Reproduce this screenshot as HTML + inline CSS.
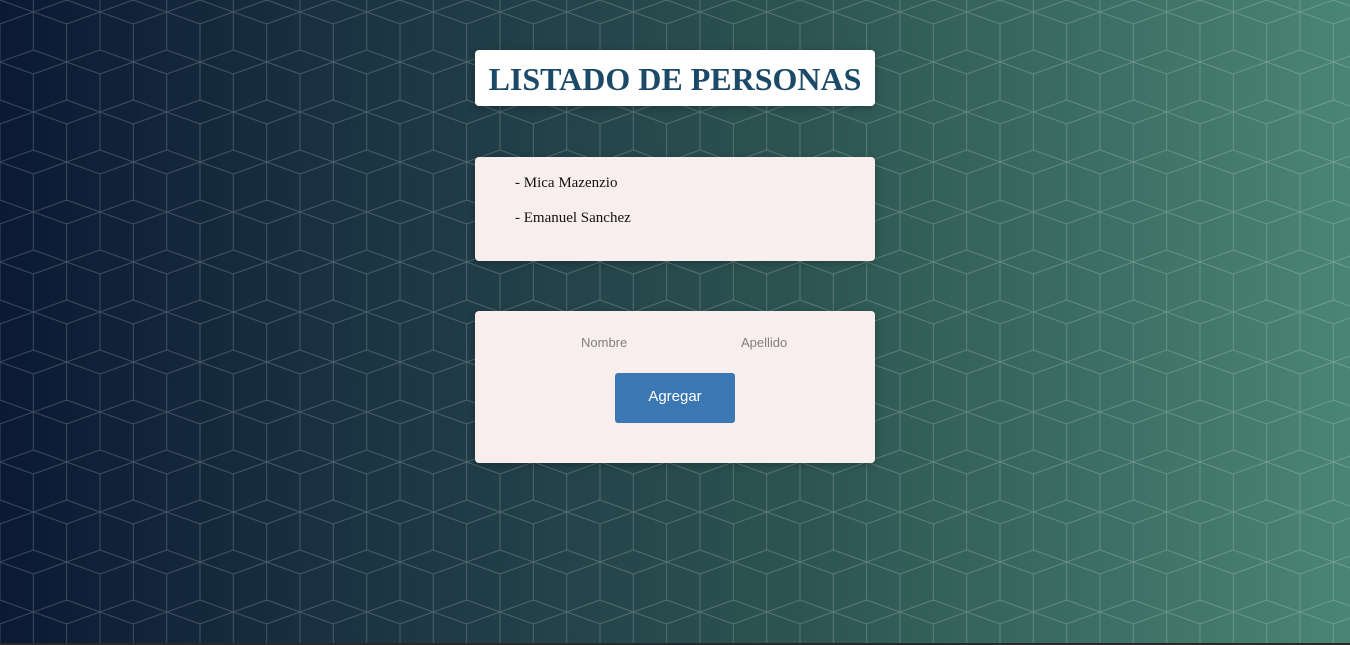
<!DOCTYPE html>
<html><head><meta charset="utf-8"><style>
html,body{margin:0;padding:0;width:1350px;height:645px;overflow:hidden}
body{background:linear-gradient(90deg,#0b1934 0%,#1d3744 30%,#2d5552 60%,#4a8573 100%);position:relative;font-family:"Liberation Serif",serif}
svg.bg{position:absolute;left:0;top:0}
.box{position:absolute;left:475px;width:400px;background:#f7eeed;border-radius:4px;box-shadow:0 2px 8px rgba(0,0,0,.25)}
.title{top:50px;height:56px;background:#fff;text-align:center;font-weight:bold;font-size:32px;color:#1b4a68;line-height:58px}
.list{top:157px;height:104px}
.list div{position:absolute;left:40px;font-size:15px;color:#111}
.form{top:311px;height:152px}
.lbl{position:absolute;top:24px;font-family:"Liberation Sans",sans-serif;font-size:13px;color:#808080}
.btn{position:absolute;left:140px;top:62px;width:120px;height:50px;background:#3a77b3;border-radius:3px;color:#fff;font-family:"Liberation Sans",sans-serif;font-size:15px;text-align:center;line-height:48px}
.bar{position:absolute;left:0;top:643px;width:1350px;height:2px;background:#2a2a2a}
</style></head><body>
<svg class="bg" width="1350" height="645"><defs><pattern id="p" width="66.667" height="100" patternUnits="userSpaceOnUse" patternTransform="translate(33.33 12)"><path d="M0 0L33.33 12L66.67 0M33.33 12V50M0 0V38M66.67 0V38M0 38L33.33 50L66.67 38M33.33 50L0 62M33.33 50L66.67 62M0 62V100M66.67 62V100M33.33 50V88M33.33 88L0 100M33.33 88L66.67 100" fill="none" stroke="rgba(255,255,255,0.2)" stroke-width="1"/></pattern></defs><rect width="1350" height="645" fill="url(#p)"/></svg>
<div class="box title">LISTADO DE PERSONAS</div>
<div class="box list"><div style="top:18px">- Mica Mazenzio</div><div style="top:53px">- Emanuel Sanchez</div></div>
<div class="box form"><span class="lbl" style="left:106px">Nombre</span><span class="lbl" style="left:266px">Apellido</span><div class="btn">Agregar</div></div>
<div class="bar"></div>
</body></html>
